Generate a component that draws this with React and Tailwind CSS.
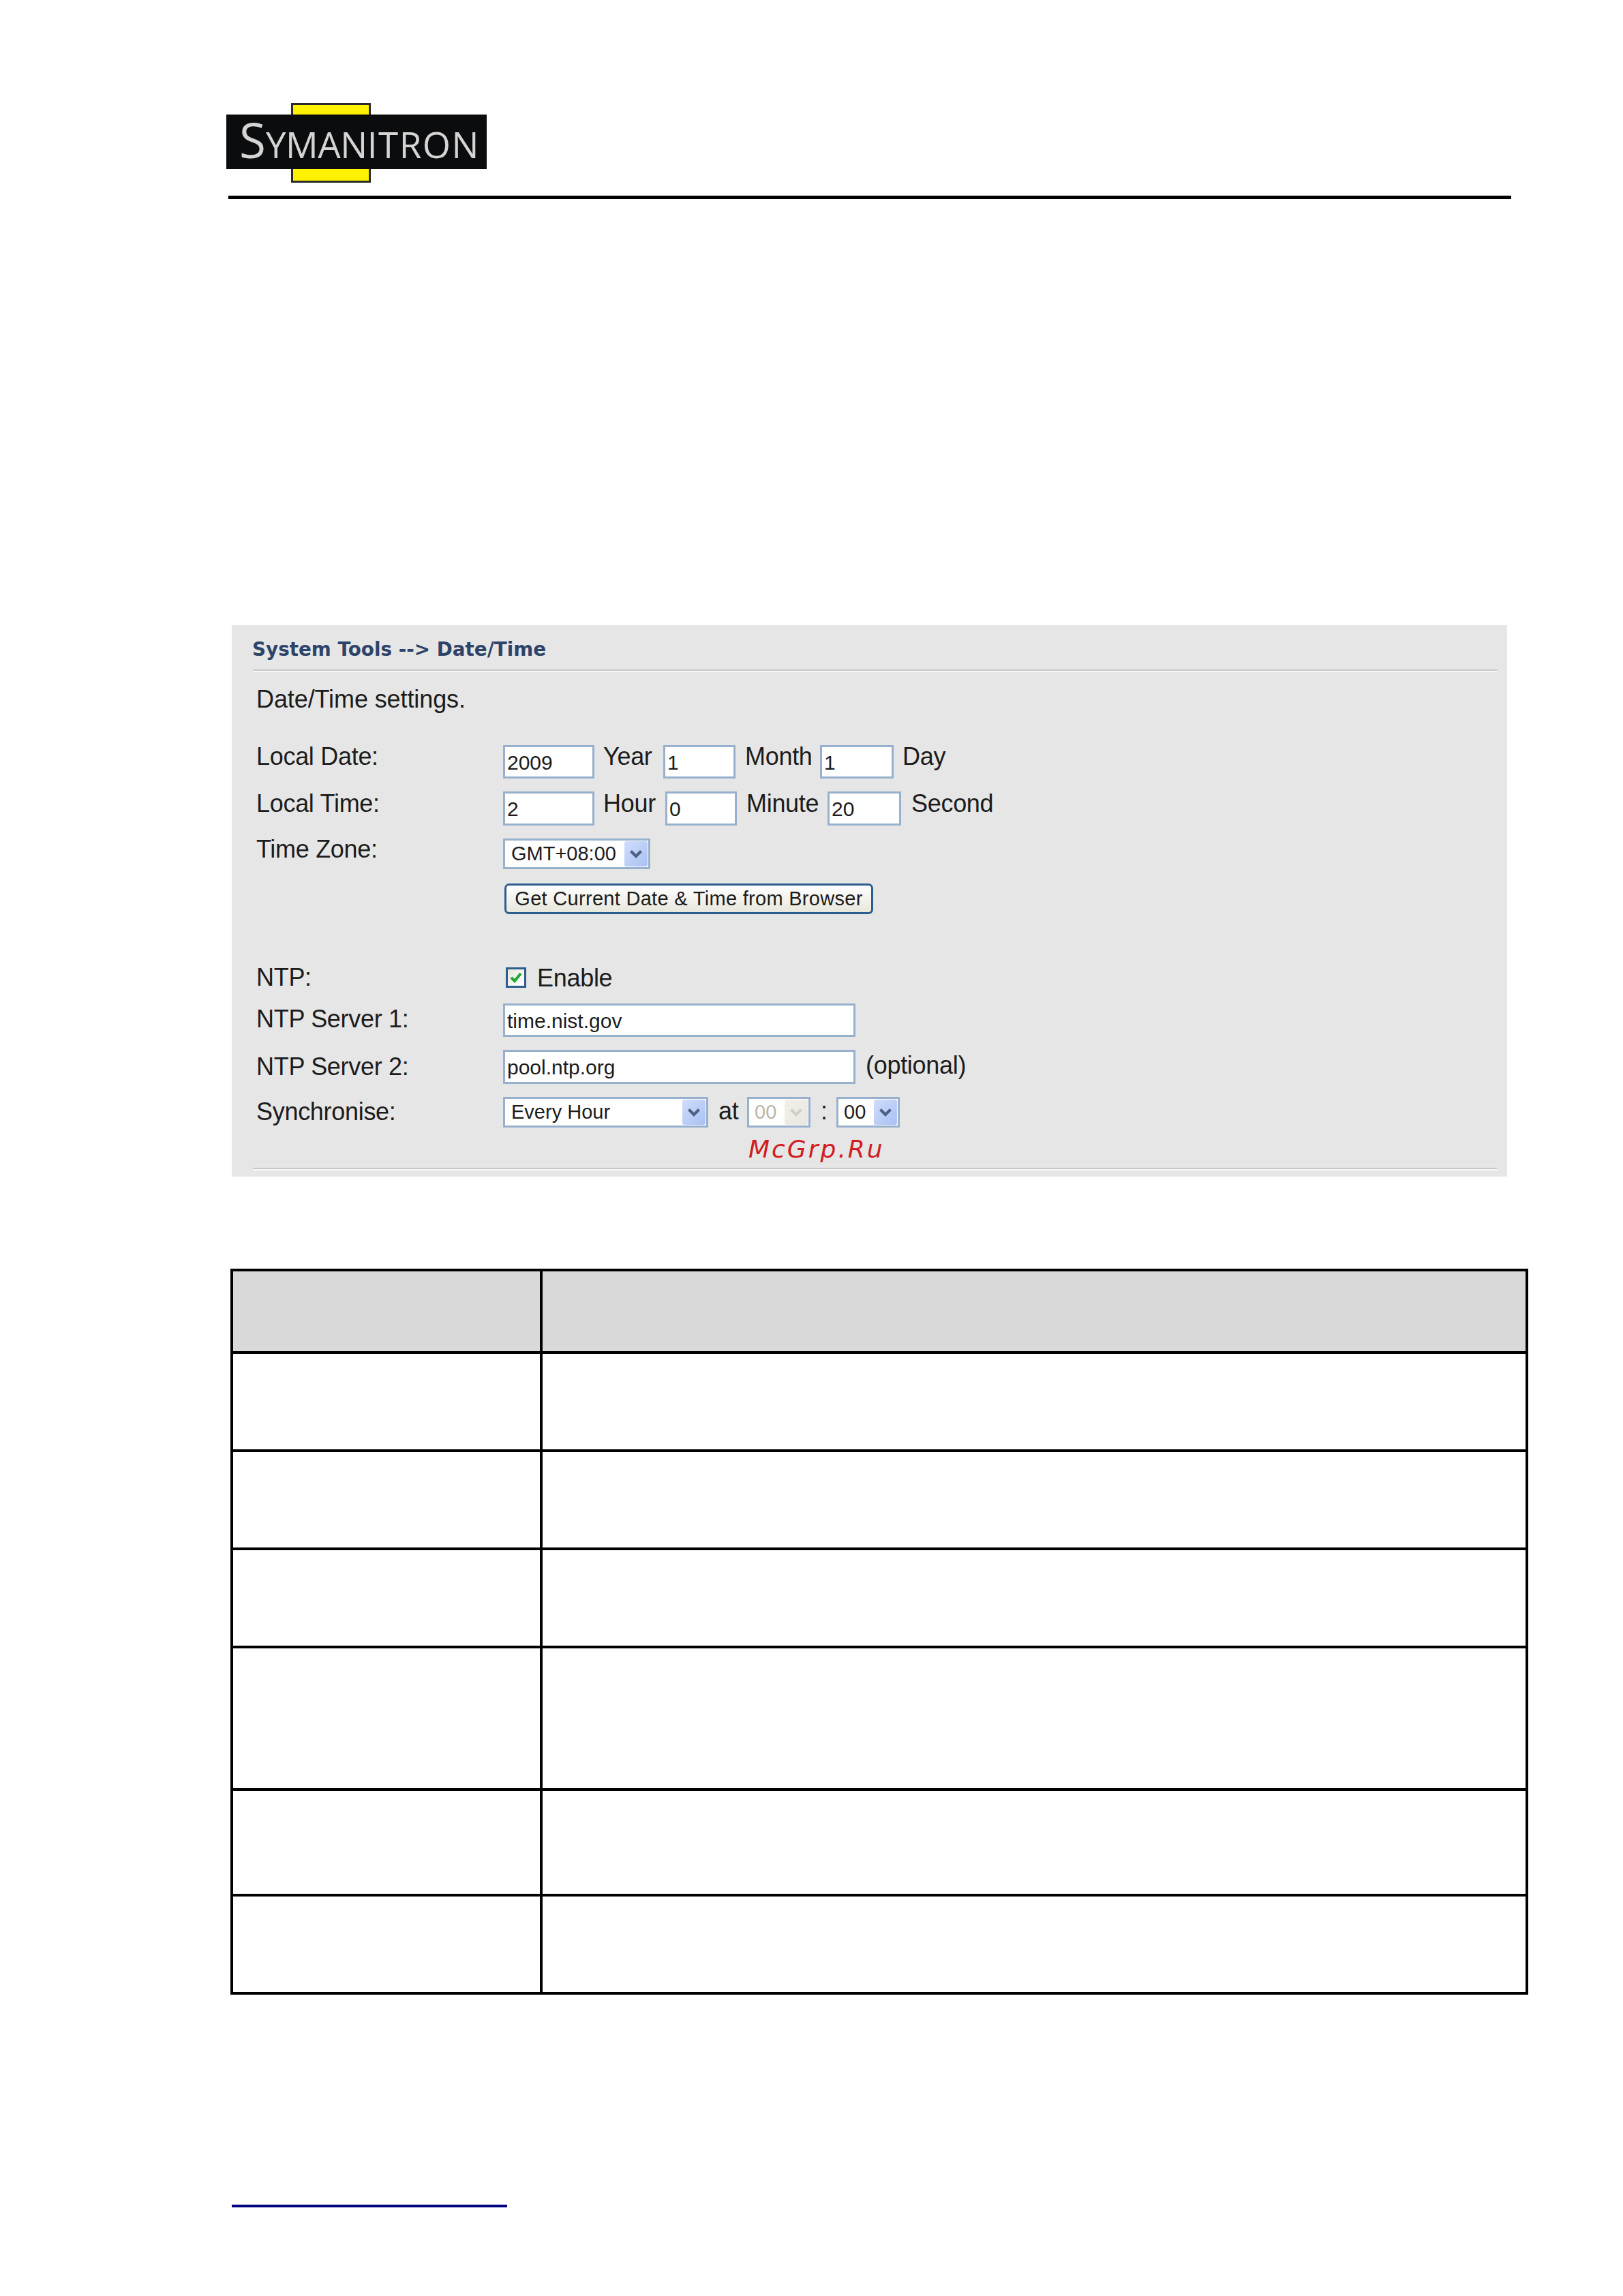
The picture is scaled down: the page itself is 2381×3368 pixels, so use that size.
import React from 'react';

const arial = 'font-["Liberation_Sans",Arial,sans-serif]';

const Chevron = ({ color = '#4d6185' }) => (
  <svg width="20" height="14" viewBox="0 0 20 14" fill="none">
    <path d="M2.5 2.5 L10 10 L17.5 2.5" stroke={color} strokeWidth="4.2" />
  </svg>
);

const TextBox = ({ value, className = '' }) => (
  <input
    readOnly
    value={value}
    className={`shrink-0 border-[3px] border-[#97b0cd] bg-white pl-[3px] pt-[2px] text-[30px] text-[#1c1c1c] outline-none ${arial} ${className}`}
  />
);

const SelectBox = ({ value, disabled = false, className = '', textClass = 'pl-[9px]' }) => (
  <div className={`flex h-[45px] shrink-0 items-center justify-between border-[3px] border-[#97b0cd] bg-white ${className}`}>
    <span className={`text-[29px] leading-none ${textClass} ${disabled ? 'text-[#b9b6a8]' : 'text-[#1c1c1c]'}`}>{value}</span>
    <span
      className={`m-px flex h-[37px] w-[34px] items-center justify-center rounded-[3px] bg-gradient-to-br ${
        disabled ? 'from-[#f0efe9] to-[#e8e7df]' : 'from-[#d0dcfb] to-[#a9c1f3]'
      }`}
    >
      <Chevron color={disabled ? '#cfcfc8' : '#4d6185'} />
    </span>
  </div>
);

const Label = ({ children, className = '' }) => (
  <span className={`-ml-[1px] block w-[362px] shrink-0 text-[36px] leading-[40px] tracking-[-0.3px] ${className}`}>{children}</span>
);

const Unit = ({ children, className = '' }) => (
  <span className={`block shrink-0 text-[36px] leading-[40px] tracking-[-0.3px] ${className}`}>{children}</span>
);

const Divider = ({ className = '' }) => (
  <div className={`ml-[31px] mr-[15px] h-[4px] border-t-2 border-b-2 border-t-[#c8c8c8] border-b-[#f6f6f6] ${className}`} />
);

const rows = [
  'h-[121px] bg-[#d9d9d9]',
  'h-[144px]',
  'h-[144px]',
  'h-[144px]',
  'h-[209px]',
  'h-[155px]',
  'h-[140px]',
];

const App = () => (
  <div className={`h-[3368px] w-[2381px] overflow-hidden bg-white pt-[151px] text-[#1c1c1c] ${arial}`}>
    {/* logo */}
    <div className="relative ml-[332px] h-[117px] w-[382px] pt-[17px]">
      <div className="absolute left-[95px] top-0 h-[117px] w-[117px] border-[3px] border-[#2a2a2a] bg-[#fff200]" />
      <div className="relative flex h-[80px] items-baseline bg-[#0b0c0d] pl-[19px] pt-[2px] font-['Open_Sans',sans-serif] font-normal text-[#d4d4d4] blur-[0.7px]">
        <span className="text-[71px] leading-[70px]">S</span>
        <span className="text-[53px] leading-[70px] tracking-[-0.5px]">YMAN</span>
        <span className="text-[53px] leading-[70px] tracking-[1.5px]">ITRON</span>
      </div>
    </div>
    <div className="ml-[335px] mt-[19px] h-[5px] w-[1882px] bg-black" />

    {/* date/time panel */}
    <div className="relative ml-[340px] mt-[625px] h-[809px] w-[1871px] bg-[#e6e6e6] pt-[20px]">
      <h2 className='pl-[30px] font-["DejaVu_Sans",sans-serif] text-[27.8px] font-bold leading-[32px] text-[#2e4369]'>
        System Tools --&gt; Date/Time
      </h2>
      <Divider className="mt-[13px]" />
      <div className="pl-[37px]">
        <p className="-ml-[1px] mt-[20px] h-[84px] text-[36px] leading-[40px] tracking-[-0.1px]">Date/Time settings.</p>

        <div className="flex h-[69px] items-start">
          <Label>Local Date:</Label>
          <TextBox value="2009" className="mt-[3px] h-[49px] w-[134px]" />
          <Unit className="w-[101px] pl-[13px]">Year</Unit>
          <TextBox value="1" className="mt-[3px] h-[49px] w-[106px]" />
          <Unit className="w-[124px] pl-[14px]">Month</Unit>
          <TextBox value="1" className="mt-[3px] h-[49px] w-[108px]" />
          <Unit className="pl-[13px]">Day</Unit>
        </div>

        <div className="flex h-[67px] items-start">
          <Label>Local Time:</Label>
          <TextBox value="2" className="mt-[2px] h-[50px] w-[134px]" />
          <Unit className="w-[104px] pl-[13px]">Hour</Unit>
          <TextBox value="0" className="mt-[2px] h-[50px] w-[105px]" />
          <Unit className="w-[133px] pl-[14px]">Minute</Unit>
          <TextBox value="20" className="mt-[2px] h-[50px] w-[108px]" />
          <Unit className="pl-[15px]">Second</Unit>
        </div>

        <div className="flex h-[70px] items-start">
          <Label>Time Zone:</Label>
          <SelectBox value="GMT+08:00" className="mt-[4px] w-[216px]" />
        </div>

        <div className="flex h-[118px] items-start">
          <Label />
          <button className="ml-[2px] h-[45px] w-[541px] rounded-[7px] border-[3px] border-[#2c5d8f] bg-gradient-to-b from-white to-[#e8e7dc] text-[29px] leading-none tracking-[0.3px] text-[#1c1c1c]">
            Get Current Date &amp; Time from Browser
          </button>
        </div>

        <div className="flex h-[58px] items-start">
          <Label>NTP:</Label>
          <span className="ml-[4px] mt-[5px] flex h-[30px] w-[30px] shrink-0 items-center justify-center border-[3px] border-[#2c5d8f] bg-gradient-to-br from-[#e6e6df] to-white">
            <svg width="20" height="18" viewBox="0 0 20 18" fill="none">
              <path d="M3 9 L8 14 L17 3" stroke="#21a534" strokeWidth="4" />
            </svg>
          </span>
          <Unit className="ml-[16px] mt-[1px]">Enable</Unit>
        </div>

        <div className="flex h-[68px] items-start">
          <Label className="mt-[3px]">NTP Server 1:</Label>
          <TextBox value="time.nist.gov" className="h-[49px] w-[517px]" />
        </div>

        <div className="flex h-[69px] items-start">
          <Label className="mt-[5px]">NTP Server 2:</Label>
          <TextBox value="pool.ntp.org" className="h-[50px] w-[517px]" />
          <Unit className="ml-[15px] mt-[3px]">(optional)</Unit>
        </div>

        <div className="flex h-[45px] items-start">
          <Label className="mt-[2px]">Synchronise:</Label>
          <SelectBox value="Every Hour" className="w-[301px]" />
          <Unit className="mt-[1px] w-[57px] pl-[15px]">at</Unit>
          <SelectBox value="00" disabled className="w-[93px]" textClass="pl-[8px]" />
          <Unit className="mt-[1px] w-[38px] pl-[15px]">:</Unit>
          <SelectBox value="00" className="w-[93px]" textClass="pl-[8px]" />
        </div>
      </div>
      <Divider className="mt-[59px]" />

      {/* site watermark over the panel */}
      <span className='absolute left-[758px] top-[748px] font-["DejaVu_Sans",sans-serif] text-[36px] italic leading-[42px] tracking-[3px] text-[#d01c22]'>
        McGrp.Ru
      </span>
    </div>

    {/* empty table */}
    <div className="ml-[338px] mt-[135px] w-[1904px] border-4 border-black">
      {rows.map((row, i) => (
        <div key={i} className={`flex ${row} ${i < rows.length - 1 ? 'border-b-4 border-black' : ''}`}>
          <div className="w-[454px] border-r-4 border-black" />
          <div className="flex-1" />
        </div>
      ))}
    </div>

    {/* link underline in the footer */}
    <div className="ml-[340px] mt-[308px] h-[4px] w-[404px] bg-[#000080]" />
  </div>
);

export default App;
